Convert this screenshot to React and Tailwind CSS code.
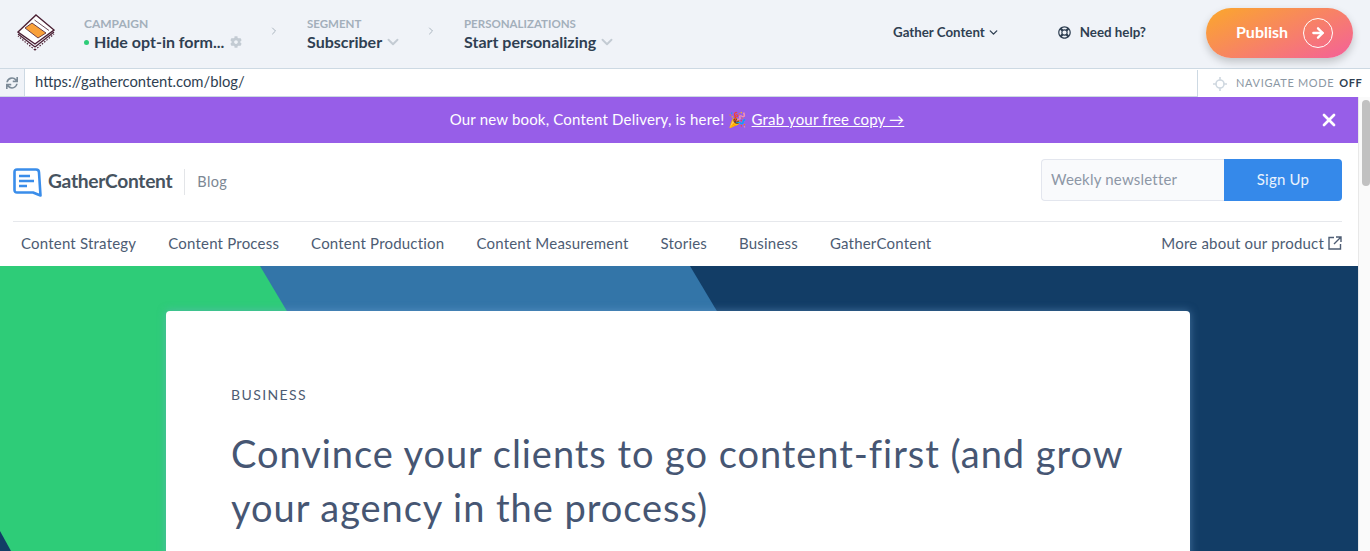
import React from 'react';
import { ChevronRight, ChevronDown, ArrowRight, X } from 'lucide-react';
import { FaCog, FaSync, FaRegLifeRing } from 'react-icons/fa';

const STEPS = [
  { label: 'SEGMENT', value: 'Subscriber' },
  { label: 'PERSONALIZATIONS', value: 'Start personalizing' },
];

const NAV_LINKS = ['Content Strategy', 'Content Process', 'Content Production', 'Content Measurement', 'Stories', 'Business', 'GatherContent'];

const StackLogo = () => (
  <svg width="38" height="38" viewBox="0 0 38 38" fill="none">
    <path d="M18 36 L1 22 M18 36 L37 20" stroke="#4a1f33" strokeWidth="1.2" strokeDasharray="1.5 1.5" />
    <path d="M18 33 L1 20 M18 33 L37 18" stroke="#4a1f33" strokeWidth="1.2" />
    <path d="M19 1 L37 16 L18 30 L1 18 Z" fill="#fff" stroke="#4a1f33" strokeWidth="1.4" />
    <path d="M8 14 L15 9 L29 19 L21 24 Z" fill="#f9a13a" stroke="#4a1f33" strokeWidth="0.8" />
    <path d="M17.5 6 L32 16.5" stroke="#4a1f33" strokeWidth="0.8" />
  </svg>
);

const GatherLogo = () => (
  <svg width="29" height="29" viewBox="0 0 29 29" fill="none">
    <path d="M4 1.5 H23 Q26 1.5 26 4.5 L27.5 27.5 L20 24.5 H4 Q1.5 24.5 1.5 22 V4 Q1.5 1.5 4 1.5 Z" stroke="#3a8dea" strokeWidth="2.6" strokeLinejoin="round" />
    <path d="M6 8 H17 M6 13 H21 M6 18 H14" stroke="#3a8dea" strokeWidth="2.6" />
  </svg>
);

const Crosshair = () => (
  <svg width="14" height="14" viewBox="0 0 14 14" fill="none" stroke="#cfd8e0" strokeWidth="1.6">
    <circle cx="7" cy="7" r="4" />
    <path d="M7 0 V3.5 M7 10.5 V14 M0 7 H3.5 M10.5 7 H14" />
  </svg>
);

const ExternalBox = () => (
  <svg className="ml-[4px]" width="14" height="14" viewBox="0 0 14 14" fill="none" stroke="currentColor" strokeWidth="1.4">
    <path d="M6 1.5 H1 V13 H12.5 V8" />
    <path d="M8 1 H13 V6 M13 1 L6 8" />
  </svg>
);

const HeroShapes = () => (
  <svg className="absolute inset-0 w-full h-full" viewBox="0 0 1358 285" preserveAspectRatio="none">
    <rect width="1358" height="285" fill="#123d66" />
    <polygon points="200,0 690,0 860,285 200,285" fill="#3375a8" />
    <polygon points="0,0 260,0 430,285 11,285 0,265" fill="#2ecc78" />
  </svg>
);

const App = () => {
  return (
    <div className="h-[551px] w-[1370px] overflow-hidden bg-white font-['Lato',sans-serif]">
      <header className="h-[69px] flex items-center bg-[#f0f3f8] border-b border-[#cdd9e3]">
        <div className="ml-[17px] w-[38px] h-[38px] -mt-[2px]">
          <StackLogo />
        </div>
        <div className="ml-[29px] w-[184px]">
          <div className="text-[12px] leading-[15px] font-bold text-[#a3afbb]">CAMPAIGN</div>
          <div className="mt-[1px] flex items-center text-[#2f3f52] text-[16px] leading-[20px] font-bold">
            <span className="w-[5px] h-[5px] rounded-full bg-[#2ecc78] mr-[5px]" />
            Hide opt-in form...
            <FaCog className="ml-[6px] text-[#c3cbd3]" size={12} />
          </div>
        </div>
        <ChevronRight className="text-[#a9b4be] -mt-[6px]" size={12} />
        {STEPS.map((step, i) => (
          <React.Fragment key={step.label}>
            <div className={i === 0 ? 'ml-[27px] w-[118px]' : 'ml-[27px] w-[160px]'}>
              <div className="text-[11.5px] leading-[15px] font-bold text-[#a3afbb]">{step.label}</div>
              <div className="mt-[1px] flex items-center text-[#2f3f52] text-[16px] leading-[20px] font-bold">
                {step.value}
                <ChevronDown className="ml-[2px] text-[#c3cbd3]" size={18} strokeWidth={2.5} />
              </div>
            </div>
            {i === 0 && <ChevronRight className="text-[#a9b4be] -mt-[6px]" size={12} />}
          </React.Fragment>
        ))}
        <div className="ml-auto flex items-center text-[13.3px] font-bold text-[#2f3f52] -mt-[3px]">
          Gather Content
          <ChevronDown className="ml-[2px]" size={13} strokeWidth={2.5} />
        </div>
        <div className="ml-[58px] flex items-center text-[13.3px] font-bold text-[#2f3f52] -mt-[3px]">
          <FaRegLifeRing size={13} />
          <span className="ml-[9px]">Need help?</span>
        </div>
        <button className="ml-[60px] mr-[17px] -mt-[2px] w-[147px] h-[50px] rounded-full flex items-center pl-[30px] text-white font-bold text-[16px] bg-[linear-gradient(155deg,#fba82b,#f4609a)] shadow-[0_4px_8px_rgba(0,0,0,0.2)]">
          <span className="-translate-y-[1px]">Publish</span>
          <span className="ml-[15px] w-[30px] h-[30px] rounded-full border border-white flex items-center justify-center">
            <ArrowRight size={16} strokeWidth={3.5} />
          </span>
        </button>
      </header>

      <div className="h-[28px] flex items-center border-b border-[#cdd9e3] bg-white">
        <div className="w-[25px] h-full flex items-center justify-center border-r border-[#cdd9e3] bg-[#f0f3f8]">
          <FaSync className="text-[#7b8a97]" size={12} />
        </div>
        <div className="flex-1 pl-[10px] text-[14.8px] text-[#2f3f52] -translate-y-[1px]">https://gathercontent.com/blog/</div>
        <div className="w-[173px] h-full flex items-center border-l border-[#cdd9e3] bg-white pl-[15px] translate-y-[1px]">
          <Crosshair />
          <span className="ml-[9px] text-[11px] tracking-[0.65px] text-[#8b97a3]">NAVIGATE MODE</span>
          <span className="ml-[5px] text-[11px] font-bold tracking-[0.5px] text-[#2f3f52]">OFF</span>
        </div>
      </div>

      <div className="flex h-[454px]">
        <main className="flex-1 min-w-0 flex flex-col text-[#4d5c73]">
          <div className="h-[46px] shrink-0 bg-[#975ee8] flex items-center justify-center relative text-white text-[15px] tracking-[0.18px] pr-[4px]">
            <span className="-translate-y-[1px]">Our new book, Content Delivery, is here! 🎉 <a className="underline">Grab your free copy →</a></span>
            <X className="absolute right-[19px] top-[13px]" size={20} strokeWidth={3.2} />
          </div>

          <div className="ml-[13px] mr-[16px] h-[79px] shrink-0 flex items-center border-b border-[#e6e8ec]">
            <GatherLogo />
            <span className="ml-[6px] text-[19.2px] font-bold text-[#47535f] tracking-[-0.3px] -translate-y-[1px]">GatherContent</span>
            <span className="ml-[12px] h-[26px] border-l border-[#e3e5e8]" />
            <span className="ml-[12px] text-[14.5px] text-[#7c8794] tracking-[0.4px]">Blog</span>
            <div className="ml-auto -mt-[4px] flex h-[42px]">
              <div className="w-[183px] border border-[#e3e6ee] border-r-0 rounded-l-[4px] bg-[#f9fafc] pl-[9px] flex items-center text-[15px] text-[#8d97a6] tracking-[0.2px]">
                <span className="-translate-y-[1px]">Weekly newsletter</span>
              </div>
              <button className="w-[118px] rounded-r-[4px] bg-[#3589ea] text-white/90 text-[15px] tracking-[0.2px]">
                <span className="block -translate-y-[1px]">Sign Up</span>
              </button>
            </div>
          </div>

          <nav className="ml-[13px] mr-[16px] h-[44px] shrink-0 flex items-center pl-[8px] gap-[32px] text-[15px] tracking-[0.2px]">
            {NAV_LINKS.map((link) => (
              <a key={link} className="-translate-y-[1px]">{link}</a>
            ))}
            <a className="ml-auto flex items-center -translate-y-[1px]">
              More about our product
              <ExternalBox />
            </a>
          </nav>

          <section className="relative flex-1 min-h-0 overflow-hidden">
            <HeroShapes />
            <article className="relative ml-[166px] mt-[45px] w-[1024px] h-[300px] rounded-t-[4px] bg-white pl-[65px] pr-[50px] pt-[75px] shadow-[0_0_8px_rgba(120,170,220,0.5)]">
              <div className="text-[14px] leading-[17px] tracking-[1.4px] text-[#4d5c73]">BUSINESS</div>
              <h1 className="mt-[23px] text-[38px] leading-[54px] tracking-[0.95px] text-[#465673] font-normal">
                Convince your clients to go content-first (and grow your agency in the process)
              </h1>
            </article>
          </section>
        </main>

        <aside className="w-[12px] shrink-0 bg-[#fafafa] border-l border-[#e8e8e8] pt-[3px] pl-[3px]">
          <div className="w-[8px] h-[86px] rounded-full bg-[#c1c1c1]" />
        </aside>
      </div>
    </div>
  );
};

export default App;
